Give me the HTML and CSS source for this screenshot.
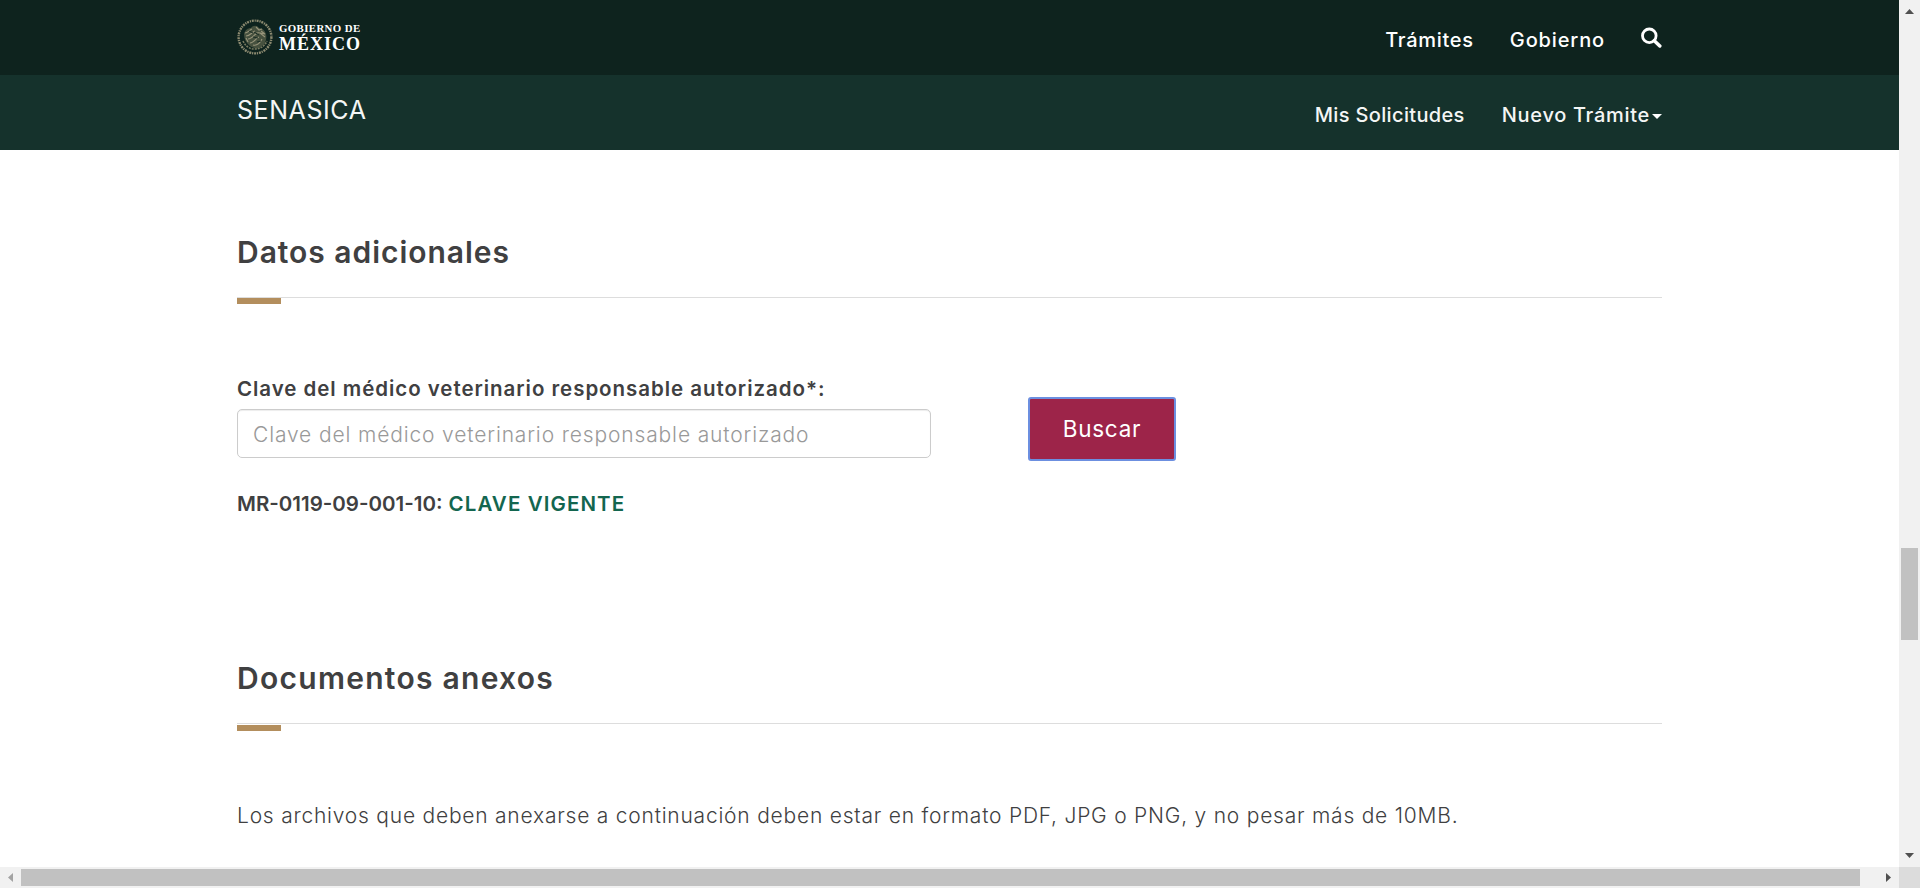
FILE: index.html
```
<!DOCTYPE html>
<html lang="es">
<head>
<meta charset="utf-8">
<title>SENASICA</title>
<link rel="stylesheet" href="styles.css">
</head>
<body>
<div class="window">
  <div class="viewport">
    <header class="topbar">
      <div class="container bar">
        <a class="brand">
          <svg class="seal" width="36" height="36" viewBox="0 0 36 36" fill="none">
            <circle cx="18" cy="18" r="16.4" stroke="#8c8a70" stroke-width="2.4" stroke-dasharray="2 .9 1.2 .8"/>
            <path d="M7 15c1-4 4-6 7-6 2-3 6-3 8 0 4 0 6 3 7 6 1 4 0 9-4 12-3 3-8 3-12 0-4-3-6-7-6-12Z" fill="#46513f"/>
            <path d="M8 14c3 0 4-3 7-4m-6 7c4 0 6-4 9-5m-7 8c4 0 6-4 9-6 3-1 5 1 8 1M13 24c4 0 6-5 9-6m-6 8c4 1 7-2 9-6M19 8l3 3 3-1M24 12l4 3m-5-1l5 4m-19 1l2 4" stroke="#97947a" stroke-width="1.1"/>
            <path d="M12 12l4 2m0 4l5 1m-1 4l4-1m-7-9l5 3" stroke="#1a2d25" stroke-width="1"/>
            <path d="M6 22c3 6 7 8 12 8s9-2 12-8" stroke="#77795f" stroke-width="1.6" stroke-dasharray="2 1"/>
          </svg>
          <span class="wordmark"><span class="gob">GOBIERNO DE</span><span class="mex">MÉXICO</span></span>
        </a>
        <nav class="nav nav-top">
          <a class="tramites">Trámites</a>
          <a class="gobierno">Gobierno</a>
          <a class="search"><svg width="22" height="22" viewBox="0 0 22 22" fill="none" stroke="#fff"><circle cx="9.3" cy="8.8" r="6.8" stroke-width="2.8"/><path d="M14.300 13.800l5.500 5.200" stroke-width="3.5" stroke-linecap="round"/></svg></a>
        </nav>
      </div>
    </header>
    <div class="subbar">
      <div class="container bar">
        <a class="agency">SENASICA</a>
        <nav class="nav nav-sub">
          <a class="solicitudes">Mis Solicitudes</a>
          <a class="nuevo">Nuevo Trámite<span class="caret"></span></a>
        </nav>
      </div>
    </div>
    <main class="container content">
      <section class="extra">
        <h2 class="title title-datos">Datos adicionales</h2>
        <div class="rule"></div>
        <div class="form">
          <div class="field">
            <label class="label" for="clave">Clave del médico veterinario responsable autorizado*:</label>
            <input class="input" id="clave" type="text" placeholder="Clave del médico veterinario responsable autorizado">
          </div>
          <button class="button">Buscar</button>
        </div>
        <p class="result"><span class="code">MR-0119-09-001-10:</span><span class="status">CLAVE VIGENTE</span></p>
      </section>
      <section class="docs">
        <h2 class="title title-docs">Documentos anexos</h2>
        <div class="rule rule-docs"></div>
        <p class="note">Los archivos que deben anexarse a continuación deben estar en formato PDF, JPG o PNG, y no pesar más de 10MB.</p>
      </section>
    </main>
  </div>
  <div class="scroll-y">
    <svg width="9" height="5" viewBox="0 0 9 5"><path d="M0 5L4.5 0 9 5Z" fill="#505050"/></svg>
    <div class="thumb-y"></div>
    <svg width="9" height="5" viewBox="0 0 9 5"><path d="M0 0h9L4.5 5Z" fill="#505050"/></svg>
  </div>
  <div class="scroll-x">
    <svg width="5" height="9" viewBox="0 0 5 9"><path d="M5 0v9L0 4.5Z" fill="#a3a3a3"/></svg>
    <div class="thumb-x"></div>
    <svg width="5" height="9" viewBox="0 0 5 9"><path d="M0 0v9l5-4.500Z" fill="#505050"/></svg>
  </div>
  <div class="corner"></div>
</div>
</body>
</html>
```
FILE: styles.css
```
* { box-sizing: border-box; }
body { margin: 0; font-family: Inter, "Open Sans", sans-serif; color: #404041; background: #fff; overflow: hidden; }
h2, p { margin: 0; white-space: nowrap; }
svg { display: block; flex: none; }

.window { display: grid; grid-template: 867px 21px / 1899px 21px; width: 1920px; height: 888px; }
.viewport { overflow: hidden; }
.container { width: 1425px; margin: 0 auto; }
.topbar { height: 75px; background: #0e231e; }
.subbar { height: 75px; background: #15322c; }
.bar { display: flex; justify-content: space-between; height: 75px; color: #fff; }

.brand { display: flex; gap: 6px; padding-top: 19px; }
.wordmark { display: flex; flex-direction: column; font-family: "Liberation Serif", serif; font-weight: 700; white-space: nowrap; }
.gob { padding-top: 4px; font-size: 10.8px; line-height: 10px; letter-spacing: .4px; }
.mex { padding-top: 2px; font-size: 18px; line-height: 18px; letter-spacing: 1px; }

.nav { display: flex; font-size: 20px; font-weight: 450; white-space: nowrap; }
.nav-top { padding-top: 25px; line-height: 30px; }
.nav-sub { padding-top: 25px; line-height: 30px; color: #f4f6f5; }
.tramites { letter-spacing: .72px; margin-right: 36px; }
.gobierno { letter-spacing: .86px; margin-right: 35px; }
.search { padding-top: 2px; }
.solicitudes { letter-spacing: .35px; margin-right: 37px; }
.nuevo { display: flex; align-items: center; height: 30px; letter-spacing: .7px; }
.caret { margin: 2px 0 0 2px; border: 5px solid transparent; border-top-color: #fff; border-bottom: 0; }
.agency { padding-top: 20px; font-size: 25px; line-height: 30px; letter-spacing: .57px; color: #f4f6f5; }

.extra { padding-top: 82px; height: 508px; }
.title { font-size: 30px; font-weight: 600; line-height: 40px; }
.title-datos { letter-spacing: .97px; }
.title-docs { letter-spacing: 1.28px; }
.rule { margin-top: 25px; height: 8px; border-top: 1px solid #ddd; }
.rule::before { content: ""; display: block; width: 44px; height: 6px; background: #b38e5d; }
.rule-docs { padding-top: 1px; }
.form { display: flex; gap: 97px; padding-top: 68px; }
.field { width: 694px; }
.label { display: block; height: 36px; font-size: 20.5px; font-weight: 600; line-height: 31px; letter-spacing: .95px; white-space: nowrap; }
.input { display: block; width: 694px; height: 49px; padding: 1px 16px 0 15px; border: 1px solid #ccc; border-radius: 5px; box-shadow: inset 0 1px 1px rgba(0, 0, 0, .075); font: 300 21px/45px Inter, sans-serif; letter-spacing: .86px; color: #555; outline: 0; }
.input::placeholder { color: #999; opacity: 1; }
.button { width: 148px; height: 64px; margin-top: 24px; padding: 0; border: 2px solid #6c8fe0; border-radius: 3px; background: #9d2449; color: #fff; font: 400 22.5px/60px Inter, sans-serif; letter-spacing: .7px; }
.result { display: flex; gap: 6px; padding-top: 28px; font-size: 20.5px; font-weight: 600; line-height: 30px; }
.code { letter-spacing: 0; }
.status { letter-spacing: 1.1px; color: #13664f; }
.note { padding-top: 70px; font-size: 21px; font-weight: 300; line-height: 30px; letter-spacing: .775px; }

.scroll-y { display: flex; flex-direction: column; align-items: center; padding: 9px 0 9px; background: #f1f1f1; }
.thumb-y { width: 17px; height: 92px; margin: 534px 0 213px; background: #c1c1c1; }
.scroll-x { display: flex; align-items: center; padding: 0 8px; background: #f1f1f1; }
.thumb-x { width: 1839px; height: 17px; margin: 0 26px 0 8px; background: #c1c1c1; }
.scroll-y svg, .scroll-y .thumb-y { flex: none; }
.corner { background: #dcdcdc; }
```
